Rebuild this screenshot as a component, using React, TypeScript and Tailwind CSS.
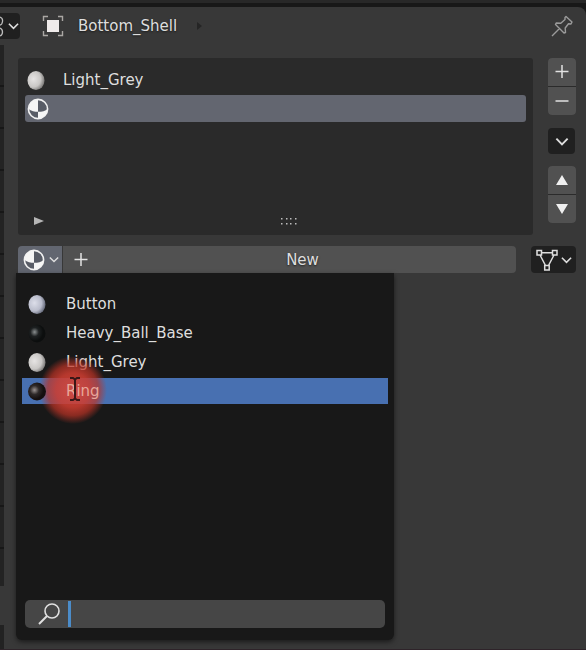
import React, { useState } from "react";

type Tone = "light" | "blue" | "dark" | "ring";

const tones: Record<Tone, [string, string, string]> = {
  light: ["#e6e4e3", "#c9c7c5", "#6d6b6a"],
  blue: ["#dcdee9", "#b9bccb", "#555a6b"],
  dark: ["#8a8f90", "#1d2021", "#0c0e0e"],
  ring: ["#9a9290", "#2e2929", "#150f0f"],
};

function Sphere({ tone, id }: { tone: Tone; id: string }) {
  const [hi, mid, low] = tones[tone];
  const dark = tone === "dark" || tone === "ring";
  return (
    <svg className="h-5 w-5 shrink-0" viewBox="0 0 20 20" aria-hidden="true">
      <defs>
        <radialGradient id={id} cx={dark ? "0.36" : "0.35"} cy="0.42" r={dark ? "0.5" : "0.7"}>
          <stop offset="0" stopColor={hi} />
          <stop offset={dark ? "0.5" : "0.6"} stopColor={mid} />
          <stop offset="1" stopColor={low} />
        </radialGradient>
      </defs>
      <ellipse cx="9" cy="10.5" rx={tone === "ring" ? 9 : 8.5} ry={dark ? 9 : 9.5} fill={`url(#${id})`} />
    </svg>
  );
}

function MaterialIcon() {
  return (
    <svg className="h-[22px] w-[22px] shrink-0" viewBox="0 0 22 22" aria-hidden="true">
      <circle cx="11" cy="11" r="9.6" fill="#585c66" stroke="#f2f2f2" strokeWidth="1.6" />
      <path d="M11 1.5A9.5 9.5 0 0 0 1.5 11C4 13 8 13.8 11 13.8Z" fill="#f5f5f5" />
      <path d="M11 13.8C15 13.8 18.5 13 20.5 11A9.5 9.5 0 0 1 11 20.5Z" fill="#f5f5f5" />
    </svg>
  );
}

function Chevron({ className }: { className: string }) {
  return (
    <svg className={className} viewBox="0 0 12 8" fill="none" stroke="currentColor" strokeWidth="1.7" aria-hidden="true">
      <path d="M1 1.5 6 6.5 11 1.5" />
    </svg>
  );
}

function Plus() {
  return (
    <svg className="h-4 w-4 shrink-0" viewBox="0 0 16 16" stroke="#e2e2e2" strokeWidth="1.5" aria-hidden="true">
      <path d="M1.5 7.5h13M8 1v13" />
    </svg>
  );
}

const materials: { name: string; tone: Tone }[] = [
  { name: "Button", tone: "blue" },
  { name: "Heavy_Ball_Base", tone: "dark" },
  { name: "Light_Grey", tone: "light" },
  { name: "Ring", tone: "ring" },
];

function Header() {
  return (
    <header className="flex h-[38px] items-center">
      <button aria-label="Editor type" className="flex h-[26px] w-5 shrink-0 items-center gap-1 rounded-r bg-[#202020] text-[#dedede]">
        <svg className="h-6 w-1 shrink-0" viewBox="0 0 4 24" fill="none" stroke="#bcbcbc" strokeWidth="1.3" aria-hidden="true">
          <path d="M0 3q3 1 2.500 4.500Q2 11 0 11M0 14q2.500 1 2.500 4T0 22" />
        </svg>
        <Chevron className="h-2 w-[11px] shrink-0" />
      </button>
      <svg className="ml-[22px] h-[22px] w-[22px] shrink-0" viewBox="0 0 22 22" fill="none" aria-hidden="true">
        <path d="M1.500 6V1.500h4.500M16 1.500h4.500v4.500M20.500 16v4.500h-4.500M6 20.500H1.500v-4.500" stroke="#aaa7a4" strokeWidth="1.400" />
        <path d="M5 5h12v12H5z" fill="#efebea" />
      </svg>
      <h1 className="ml-[14px] [text-shadow:0_1px_2px_#1b1b1b]">Bottom_Shell</h1>
      <svg className="ml-5 h-2 w-[5px]" viewBox="0 0 5 8" aria-hidden="true">
        <path d="M0 0 5 4 0 8Z" fill="#252525" />
      </svg>
      <button aria-label="Pin" className="mr-[13px] ml-auto">
        <svg className="h-[22px] w-[22px]" viewBox="0 0 22 22" fill="none" stroke="#9b9b9b" strokeWidth="1.400" strokeLinejoin="round" aria-hidden="true">
          <path d="M15 1.500 21 7l-1 2-2.500-.300-3.300 4.300.300 4.500-1.500.500L4.500 9.500l.700-1.500 4.600.200L14 4.500V2.500ZM8.500 13.500 1 21" />
        </svg>
      </button>
    </header>
  );
}

function MaterialMenu() {
  const [query, setQuery] = useState("");
  return (
    <div className="absolute top-full -left-0.5 z-10 flex h-[367px] w-[378px] flex-col rounded-b-md bg-[#181818] px-1.5 pt-[18px] pb-3 shadow-[0_2px_5px_#0008]">
      <ul>
        {materials.map((m) => (
          <li key={m.name} className="mb-[3px]">
            <button className={`relative flex h-[26px] w-full items-center gap-[18px] pl-1.5 text-left ${m.name === "Ring" ? "bg-[#4870b1]" : ""}`}>
              {m.name === "Ring" && (
                <span className="pointer-events-none absolute -top-[22px] left-[17px] h-[68px] w-[68px] rounded-full bg-[radial-gradient(circle_closest-side,#d6483aee_0%,#cc3c30e0_50%,#bd3325b0_75%,#b52d2400_100%)]" />
              )}
              <span className="z-10 flex"><Sphere tone={m.tone} id={`menu-${m.name}`} /></span>
              <span className={m.name === "Ring" ? "z-10 text-[#e8a79a]" : ""}>{m.name}</span>
              {m.name === "Ring" && (
                <svg className="pointer-events-none absolute -top-px left-[47px] z-10 h-6 w-3" viewBox="0 0 12 24" fill="none" stroke="#3a1717" strokeWidth="2" aria-hidden="true">
                  <path d="M1 1h3l2 1.500L8 1h3M6 2v20M1 23h3l2-1.500L8 23h3" />
                </svg>
              )}
            </button>
          </li>
        ))}
      </ul>
      <label className="mx-[3px] mt-auto flex h-7 items-center rounded-[5px] bg-[#464646] pl-[13px]">
        <svg className="h-[22px] w-[22px] shrink-0" viewBox="0 0 22 22" fill="none" stroke="#e0e0e0" strokeWidth="1.600" aria-hidden="true">
          <circle cx="14" cy="8" r="7" />
          <path d="M9 13 1 21" strokeWidth="2" />
        </svg>
        <span className="ml-2 h-[26px] w-[3px] bg-[#4b8cc9]" />
        <input
          aria-label="Search materials"
          className="min-w-0 flex-1 bg-transparent px-1 outline-none"
          value={query}
          onChange={(e) => setQuery(e.target.value)}
        />
      </label>
    </div>
  );
}

const pairButton = "flex h-7 w-full items-center justify-center bg-[#515151]";

export default function App() {
  return (
    <div className="flex min-h-screen flex-col bg-[#181818] font-['DejaVu_Sans',sans-serif] text-[15px] leading-5 text-[#dedede]">
      <div className="h-[3px] bg-[#282828]" />
      <main className="mt-1 flex flex-1 flex-col rounded-tr-lg border-b border-[#2e2329] bg-[#383838]">
        <Header />
        <div className="flex flex-1">
          <aside className="flex w-1 shrink-0 flex-col bg-[#222]">
            <div className="h-[541px] bg-[repeating-linear-gradient(#232323_0,#232323_40px,#171717_40px,#171717_42px)]" />
            <div className="h-[39px] bg-[#383838]" />
          </aside>
          <div className="min-w-0 flex-1 pt-[13px] pr-2.5 pl-[14px]">
            <div className="flex gap-[15px]">
              <section aria-label="Material slots" className="flex h-[177px] min-w-0 flex-1 flex-col rounded-[3px] bg-[#2a2a2a] px-[7px] pt-2 pb-1">
                <button className="mb-0.5 flex h-[27px] items-center gap-4 pl-0.5 text-left">
                  <Sphere tone="light" id="slot-light" />
                  <span>Light_Grey</span>
                </button>
                <button aria-label="Empty slot" className="flex h-[27px] items-center rounded-[3px] bg-[#636670] pl-0.5">
                  <MaterialIcon />
                </button>
                <div className="mt-auto flex h-5 items-center">
                  <button aria-label="Show filters" className="ml-[9px]">
                    <svg className="h-2.5 w-2.5" viewBox="0 0 10 10" aria-hidden="true">
                      <path d="M0 1 10 5 0 9Z" fill="#b5b5b5" />
                    </svg>
                  </button>
                  <div className="flex flex-1 justify-center pl-2">
                    <svg className="h-2 w-4" viewBox="0 0 16 8" fill="#bdbdbd" aria-hidden="true">
                      {[0, 5, 9, 14].map((x) => (
                        <path key={x} d={`M${x} 1h1.500v1.500h-1.500zM${x} 6h1.500v1.500h-1.500z`} />
                      ))}
                    </svg>
                  </div>
                </div>
              </section>
              <div className="w-7 shrink-0">
                <div className="flex flex-col gap-px overflow-hidden rounded bg-[#2b2b2b]">
                  <button aria-label="Add slot" className={pairButton}><Plus /></button>
                  <button aria-label="Remove slot" className={pairButton}>
                    <svg className="h-4 w-4" viewBox="0 0 16 16" aria-hidden="true"><path d="M1.500 8h13" stroke="#e2e2e2" strokeWidth="1.600" /></svg>
                  </button>
                </div>
                <button aria-label="Slot specials" className="mt-[13px] flex h-[26px] w-[27px] items-center justify-center rounded bg-[#202020]">
                  <Chevron className="h-[9px] w-[14px]" />
                </button>
                <div className="mt-3 flex flex-col gap-px overflow-hidden rounded bg-[#2b2b2b]">
                  <button aria-label="Move up" className={pairButton}>
                    <svg className="h-3 w-3" viewBox="0 0 12 12" aria-hidden="true"><path d="M6 1 12 11H0Z" fill="#f0f0f0" /></svg>
                  </button>
                  <button aria-label="Move down" className={pairButton}>
                    <svg className="h-3 w-3" viewBox="0 0 12 12" aria-hidden="true"><path d="M6 11 12 1H0Z" fill="#f0f0f0" /></svg>
                  </button>
                </div>
              </div>
            </div>
            <div className="relative mt-[11px] flex h-[27px]">
              <button aria-label="Browse material" aria-expanded="true" className="flex w-11 shrink-0 items-center gap-1 rounded-tl bg-[#626670] pl-[5px]">
                <MaterialIcon />
                <Chevron className="h-[7px] w-[10px] shrink-0" />
              </button>
              <button className="ml-px flex min-w-0 flex-1 items-center rounded-r bg-[#515151] pl-2.5">
                <Plus />
                <span className="flex-1 text-center [text-shadow:0_1px_2px_#222]">New</span>
              </button>
              <button aria-label="Material data link" className="ml-[15px] flex w-[45px] shrink-0 items-center gap-[3px] rounded bg-[#202020] pl-[5px]">
                <svg className="h-[22px] w-[22px] shrink-0" viewBox="0 0 22 22" fill="none" stroke="#dfdfdf" strokeWidth="1.500" aria-hidden="true">
                  <path d="M1 1.500h4.500v4.500H1zM16.500 1.500H21v4.500h-4.500zM8.700 16.500h4.500V21H8.700zM5.500 3.700h11M4 6l5.500 10.500M18 6l-5.500 10.500" />
                </svg>
                <Chevron className="h-2 w-[11px] shrink-0" />
              </button>
              <MaterialMenu />
            </div>
          </div>
        </div>
      </main>
    </div>
  );
}
